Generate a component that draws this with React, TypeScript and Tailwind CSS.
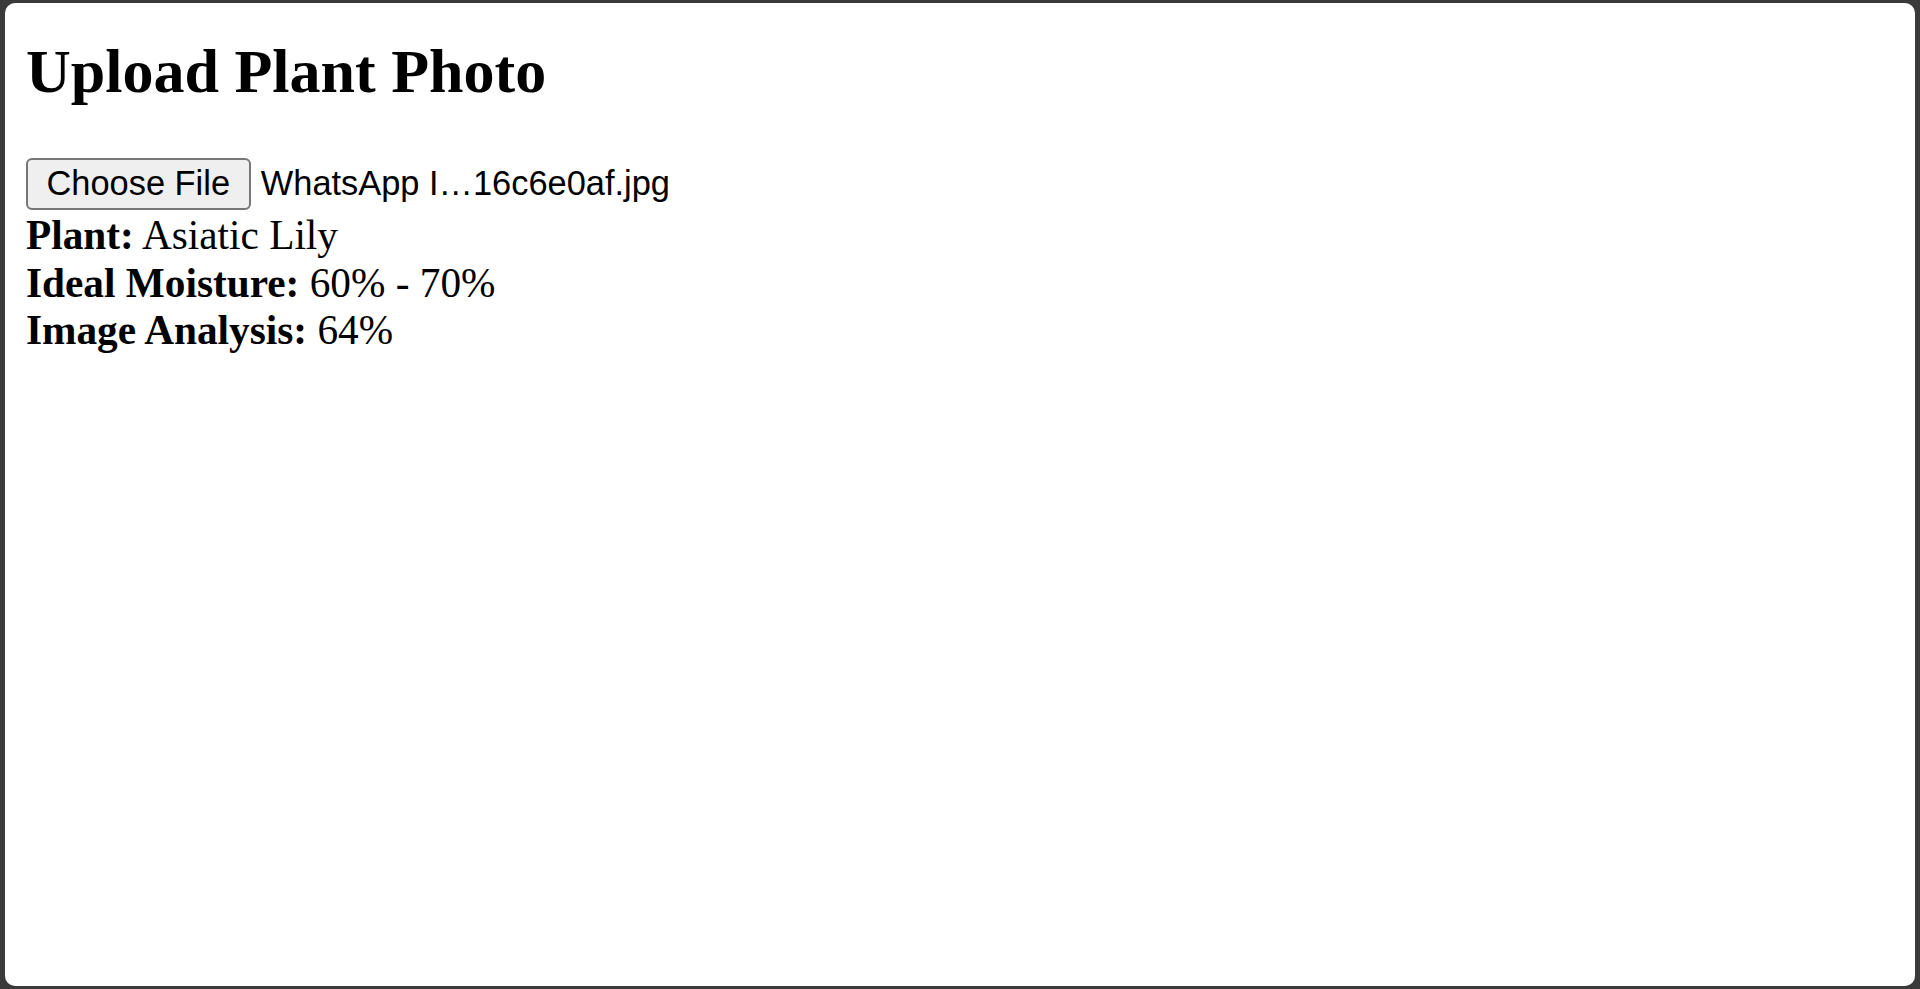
export default function App() {
  const rows = [
    { label: 'Plant:', value: 'Asiatic Lily' },
    { label: 'Ideal Moisture:', value: '60% - 70%' },
    { label: 'Image Analysis:', value: '64%' },
  ];

  return (
    <div className="h-screen w-full bg-[#111111] flex flex-col">
      <div className="flex-1 flex flex-col bg-[#3a3a3a] pt-[3px] px-[5px] pb-[3px] min-h-0">
        <div className="flex-1 bg-white rounded-[10px] pt-[33px] px-[21px] text-black font-['Liberation_Serif','Times_New_Roman',serif]">
          <h2 className="text-[62px] leading-[71px] font-bold mb-[51px]">Upload Plant Photo</h2>

          {/* File picker */}
          <div className="flex items-center h-[52px] font-['Liberation_Sans',Arial,sans-serif] text-[34.4px] leading-[39.5px]">
            <button className="h-[52px] px-[18.5px] bg-[#efefef] border-[2.6px] border-[#767676] rounded-[6px] mr-[10.3px] whitespace-nowrap">
              Choose File
            </button>
            <span className="whitespace-nowrap">WhatsApp I…16c6e0af.jpg</span>
          </div>

          {/* Results */}
          <div className="text-[41.3px] leading-[47.5px] mt-[2px]">
            {rows.map((r) => (
              <div key={r.label}>
                <strong className="font-bold">{r.label}</strong> {r.value}
              </div>
            ))}
          </div>
        </div>
      </div>
    </div>
  );
}
